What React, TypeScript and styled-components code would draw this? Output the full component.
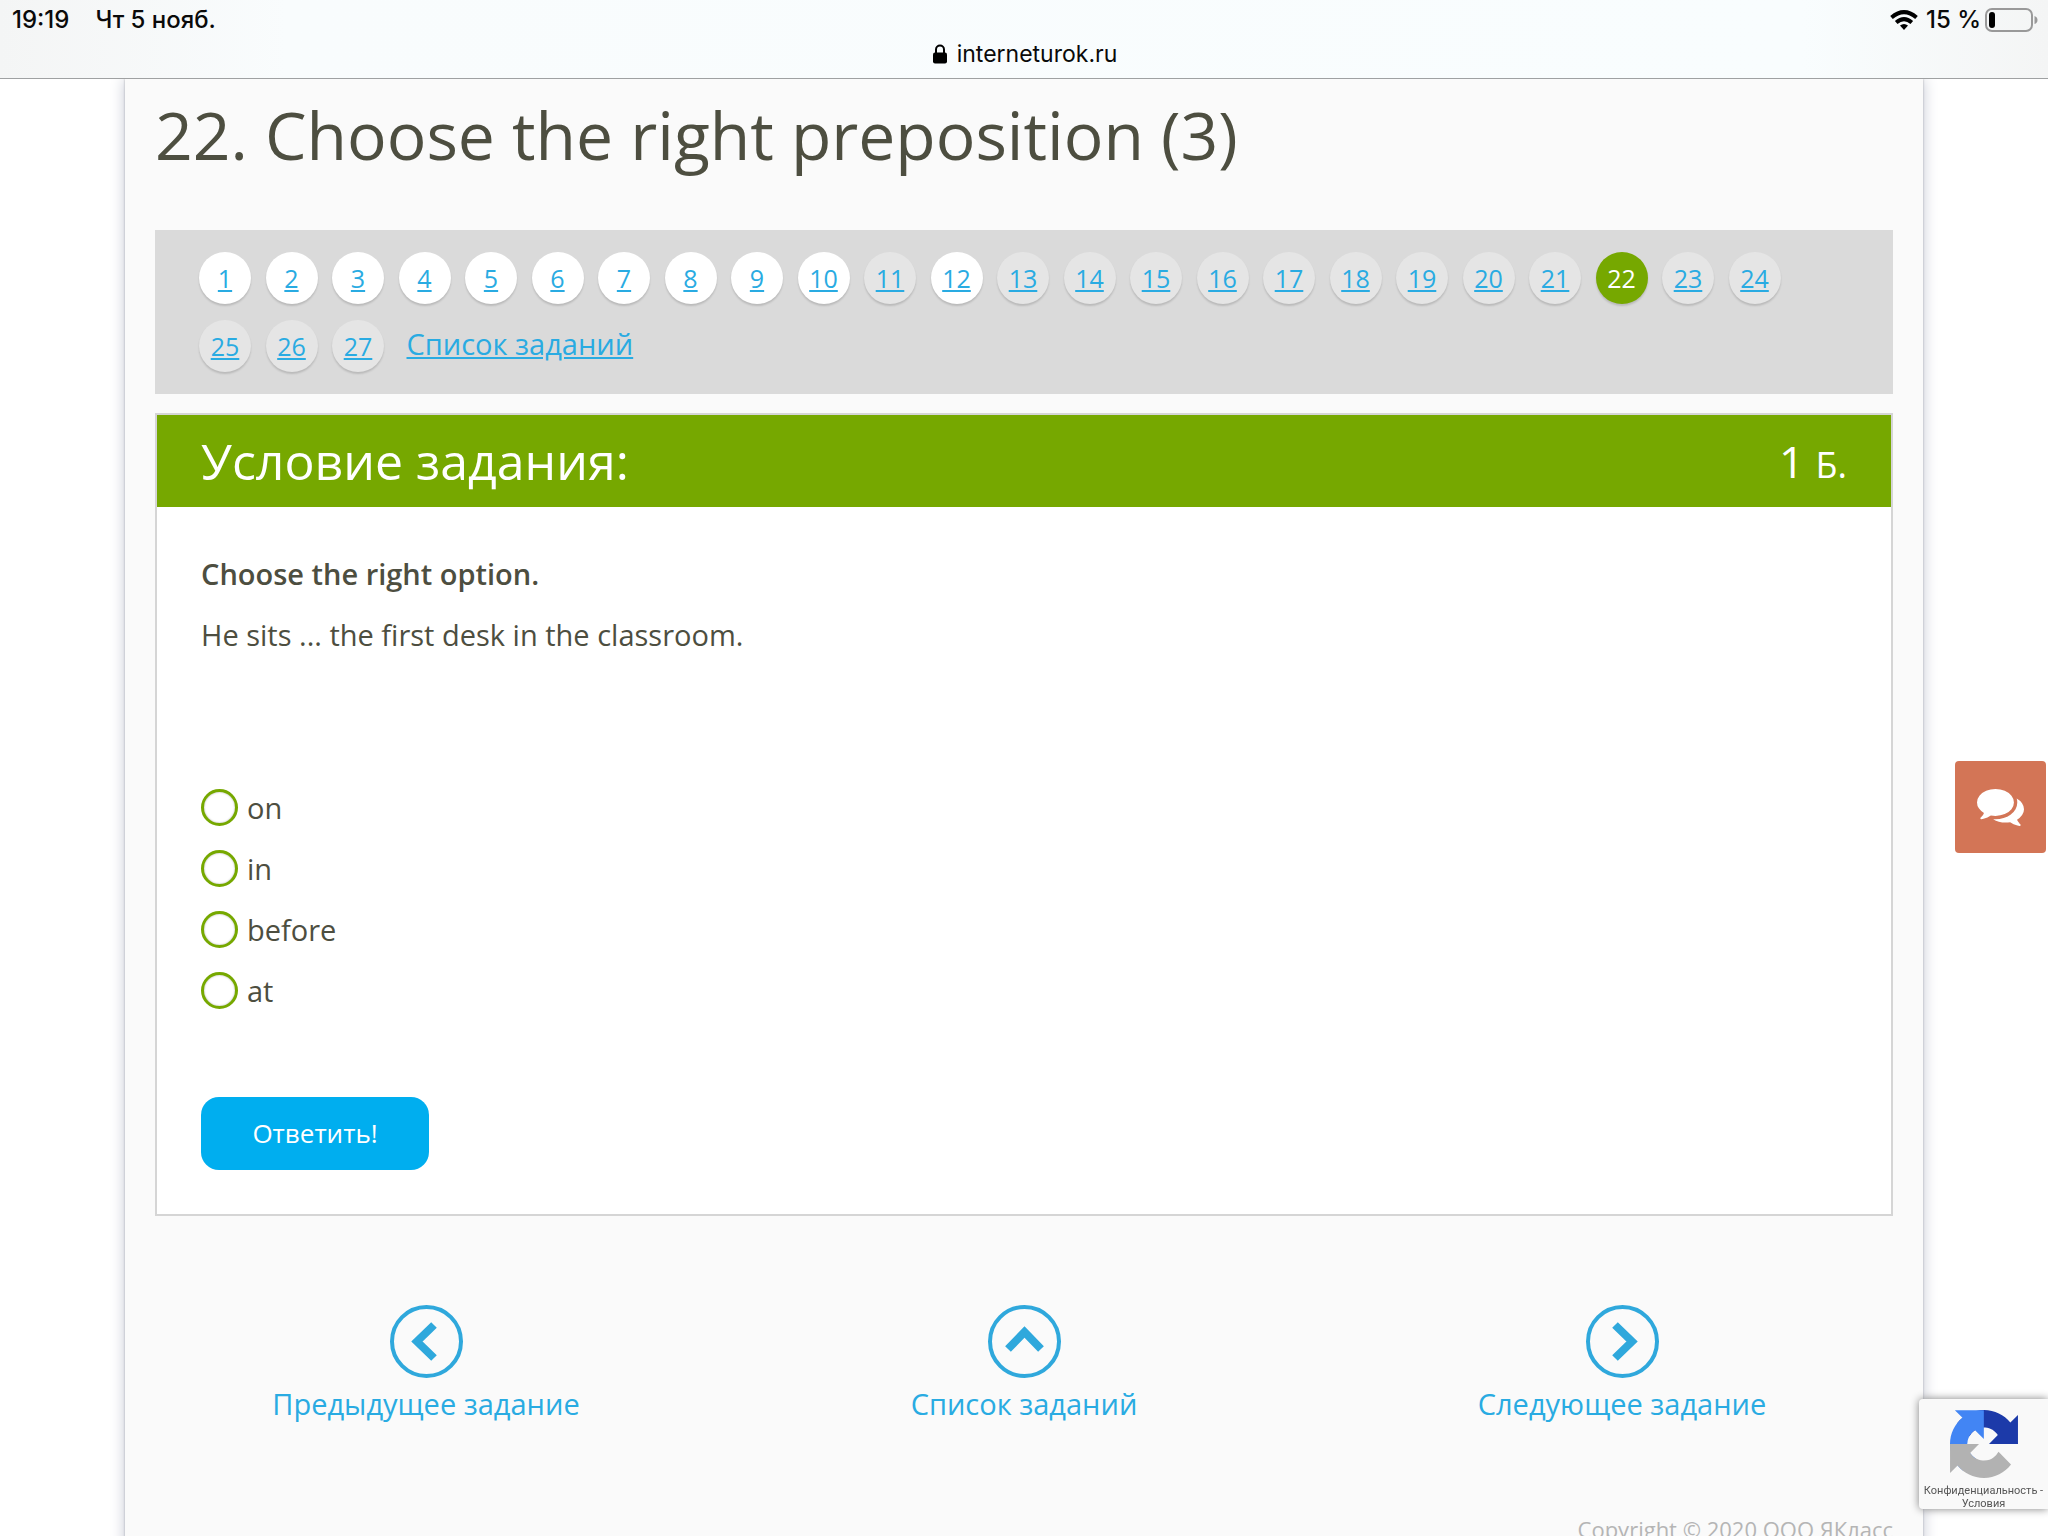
import React from "react";
import styled, { createGlobalStyle } from "styled-components";

const GlobalStyle = createGlobalStyle`
  *, *::before, *::after { box-sizing: border-box; }
  body {
    margin: 0;
    background: #fff;
    color: #4d4e40;
    font-family: "Open Sans", "Noto Sans", sans-serif;
    font-size: 29px;
  }
`;

const Shell = styled.div`
  display: flex;
  flex-direction: column;
  height: 100vh;
`;

const BrowserBar = styled.header`
  flex: none;
  padding: 6px 10px 10px 12px;
  border-bottom: 1px solid #9fa1a2;
  background: linear-gradient(90deg, #f4f5f5 0%, #f9fcfd 14%, #f9fdfe 88%, #f4f5f5 100%);
  color: #0a0a0a;
  font-family: Inter, "Liberation Sans", sans-serif;
  font-size: 24px;
  line-height: 28px;
`;

const StatusRow = styled.div`
  display: flex;
  justify-content: space-between;
  font-weight: 500;
`;

const StatusGroup = styled.div<{ $gap: number }>`
  display: flex;
  align-items: center;
  gap: ${({ $gap }) => $gap}px;
`;

const AddressRow = styled.div`
  display: flex;
  align-items: center;
  justify-content: center;
  gap: 10px;
  padding-top: 6px;
  font-size: 23px;
`;

const Scroll = styled.main`
  flex: 1;
  min-height: 0;
  overflow: hidden auto;
  scrollbar-width: none;
`;

const Page = styled.div`
  margin: 0 125px;
  background: #fafafa;
  box-shadow: 0 0 2px #a9abb0, 0 0 14px #c3c6d2;
`;

const Content = styled.div`
  padding: 11px 30px 0;
`;

const Title = styled.h1`
  margin: 0 0 52px;
  font-size: 66px;
  line-height: 88px;
  font-weight: 400;
`;

const TaskNav = styled.nav`
  padding: 22px 44px 6px;
  background: #dadada;
  font-size: 25px;
  line-height: 52px;
`;

type PillState = "done" | "open" | "current";

const pillColor = { done: "#fff", open: "#e5e5e5", current: "#76a800" };

const Pill = styled.a<{ $state: PillState }>`
  display: inline-block;
  width: 52px;
  height: 52px;
  margin: 0 8px 16px 0;
  border-radius: 50%;
  background: ${({ $state }) => pillColor[$state]};
  box-shadow: 0 2px 2px rgba(0, 0, 0, 0.15);
  color: ${({ $state }) => ($state === "current" ? "#fff" : "#29abe2")};
  text-align: center;
  text-decoration: ${({ $state }) => ($state === "current" ? "none" : "underline")};
  vertical-align: top;
`;

const ListLink = styled.a`
  display: inline-block;
  margin-left: 8px;
  color: #29abe2;
  font-size: 29px;
  line-height: 48px;
  vertical-align: top;
`;

const Card = styled.section`
  margin-top: 19px;
  border: 2px solid #d5d5d5;
  background: #fff;
`;

const CardHead = styled.div`
  display: flex;
  align-items: center;
  justify-content: space-between;
  padding: 0 44px;
  background: #76a800;
  color: #fff;
  line-height: 92px;
`;

const CardTitle = styled.h2`
  margin: 0;
  font-size: 50px;
  font-weight: 400;
`;

const Points = styled.span`
  font-size: 44px;
`;

const PointsUnit = styled.small`
  font-size: 36px;
  line-height: 1;
`;

const Form = styled.form`
  padding: 36px 44px 44px;
`;

const Question = styled.div`
  margin-bottom: 112px;
  line-height: 61px;

  p { margin: 0; }
  strong { font-weight: 600; }
`;

const Options = styled.fieldset`
  margin: 0 0 76px;
  padding: 0;
  border: 0;
`;

const Option = styled.label`
  display: flex;
  align-items: center;
  gap: 9px;
  line-height: 61px;
`;

const Radio = styled.input`
  appearance: none;
  width: 37px;
  height: 37px;
  margin: 0;
  border: 3px solid #76a800;
  border-radius: 50%;
  background: #fff;
  box-shadow: inset 0 0 2px rgba(0, 0, 0, 0.35);

  &:checked { background: radial-gradient(#76a800 0 9px, #fff 10px); }
`;

const Submit = styled.button`
  display: block;
  min-width: 228px;
  padding: 0 40px;
  border: 0;
  border-radius: 18px;
  background: #00aeef;
  color: #fff;
  font: inherit;
  font-size: 26px;
  line-height: 73px;
`;

const Pager = styled.nav`
  display: grid;
  grid-template-columns: repeat(3, 1fr);
  padding: 89px 2px;
`;

const PagerLink = styled.a`
  display: flex;
  flex-direction: column;
  align-items: center;
  gap: 6px;
  color: #29abe2;
  line-height: 40px;
  text-decoration: none;
`;

const Footer = styled.footer`
  padding: 0 30px 40px;
  color: #b5b5b5;
  font-size: 22px;
  line-height: 32px;
  text-align: right;
`;

const ChatButton = styled.button`
  position: fixed;
  top: 761px;
  right: 2px;
  display: grid;
  place-items: center;
  width: 91px;
  height: 92px;
  padding: 0;
  border: 0;
  border-radius: 4px;
  background: #d37556;
`;

const Captcha = styled.aside`
  position: fixed;
  right: 0;
  bottom: 27px;
  display: flex;
  flex-direction: column;
  align-items: center;
  gap: 6px;
  width: 129px;
  height: 110px;
  padding-top: 11px;
  border-radius: 4px 0 0 4px;
  background: #f9f9f9;
  box-shadow: 0 0 8px #808080;
  color: #555;
  font-family: Roboto, sans-serif;
  font-size: 11px;
  line-height: 13px;
  text-align: center;
  white-space: nowrap;

  svg { flex: none; }
  a { color: inherit; text-decoration: none; }
`;

function WifiIcon() {
  return (
    <svg width="28" height="20" viewBox="0 0 28 20" fill="none" stroke="#000" strokeWidth="4">
      <path d="M1.5 7.6Q14-3.2 26.5 7.6" />
      <path d="M6.2 12.6Q14 5.8 21.8 12.6" />
      <path d="M14 20l-4-4.4q4-3 8 0z" fill="#000" stroke="none" />
    </svg>
  );
}

function BatteryIcon() {
  return (
    <svg width="53" height="24" viewBox="0 0 53 24">
      <rect x="1" y="1" width="46" height="22" rx="6" fill="none" stroke="#999" strokeWidth="2" />
      <rect x="4" y="4" width="6" height="16" rx="3" fill="#000" />
      <path d="M49.5 8q3 1 3 4t-3 4z" fill="#999" />
    </svg>
  );
}

function LockIcon() {
  return (
    <svg width="14" height="20" viewBox="0 0 14 20">
      <path d="M3 9V5.5a4 4 0 0 1 8 0V9" fill="none" stroke="#000" strokeWidth="2" />
      <rect y="8.5" width="14" height="11" rx="2" fill="#000" />
    </svg>
  );
}

function ArrowIcon({ points }: { points: string }) {
  return (
    <svg width="73" height="73" viewBox="0 0 73 73" fill="none" stroke="#2fa8dc">
      <circle cx="36.5" cy="36.5" r="34.5" strokeWidth="4" />
      <polyline points={points} strokeWidth="8" />
    </svg>
  );
}

function ChatIcon() {
  return (
    <svg width="47" height="37" viewBox="0 256 1792 1408" fill="#fff">
      <path d="M1408 768q0 139-94 257t-256.5 186.5-353.5 68.5q-86 0-176-16-124 88-278 128-36 9-86 16h-3q-11 0-20.5-8t-11.5-21q-1-3-1-6.5t.5-6.5 2-6l2.5-5 3.5-5.5 4-5 4.5-5 4-4.5q5-6 23-25t26-29.5 22.5-29 25-38.5 20.5-44q-124-72-195-177t-71-224q0-139 94-257t256.5-186.5 353.5-68.5 353.5 68.5 256.5 186.5 94 257zm384 256q0 120-71 224.5t-195 176.5q10 24 20.5 44t25 38.5 22.5 29 26 29.5 23 25q1 1 4 4.5t4.5 5 4 5 3.5 5.5l2.5 5 2 6 .5 6.5-1 6.5q-3 14-13 22t-22 7q-50-7-86-16-154-40-278-128-90 16-176 16-271 0-472-132 58 4 88 4 161 0 309-45t264-129q125-92 192-212t67-254q0-77-23-152 129 71 204 178t75 230z" />
    </svg>
  );
}

function CaptchaLogo() {
  return (
    <svg width="68" height="68" viewBox="0 0 64 64">
      <path fill="#1c3aa9" d="M64 31.955l-.033-1.37V4.687l-7.16 7.16C50.948 4.674 42.033.093 32.05.093c-10.4 0-19.622 4.96-25.458 12.64l11.736 11.86a15.55 15.55 0 0 1 4.754-5.334c2.05-1.6 4.952-2.906 8.968-2.906.485 0 .86.057 1.135.163 4.976.393 9.288 3.14 11.828 7.124l-8.307 8.307L64 31.953" />
      <path fill="#4285f4" d="M31.862.094l-1.37.033H4.594l7.16 7.16C4.58 13.147 0 22.06 0 32.046c0 10.4 4.96 19.622 12.64 25.458L24.5 45.768a15.55 15.55 0 0 1-5.334-4.754c-1.6-2.05-2.906-4.952-2.906-8.968 0-.485.057-.86.163-1.135.393-4.976 3.14-9.288 7.124-11.828l8.307 8.307L31.86.095" />
      <path fill="#b2b2b2" d="M.001 32.045l.033 1.37v25.898l7.16-7.16c5.86 7.173 14.774 11.754 24.76 11.754 10.4 0 19.622-4.96 25.458-12.64l-11.736-11.86a15.55 15.55 0 0 1-4.754 5.334c-2.05 1.6-4.952 2.906-8.968 2.906-.485 0-.86-.057-1.135-.163-4.976-.393-9.288-3.14-11.828-7.124l8.307-8.307c-10.522.04-22.4.066-27.295-.005" />
    </svg>
  );
}

const CURRENT = 22;
const tasks = Array.from({ length: 27 }, (_, i) => i + 1);
const stateOf = (n: number): PillState =>
  n === CURRENT ? "current" : n <= 10 || n === 12 ? "done" : "open";

const pagerLinks = [
  { label: "Предыдущее задание", points: "44,20 27,36.5 44,53" },
  { label: "Список заданий", points: "20,44 36.5,27 53,44" },
  { label: "Следующее задание", points: "29,20 46,36.5 29,53" },
];

export default function App() {
  return (
    <Shell>
      <GlobalStyle />
      <BrowserBar>
        <StatusRow>
          <StatusGroup $gap={26}>
            <span>19:19</span>
            <span>Чт 5 нояб.</span>
          </StatusGroup>
          <StatusGroup $gap={8}>
            <WifiIcon />
            <StatusGroup $gap={4}>
              <span>15 %</span>
              <BatteryIcon />
            </StatusGroup>
          </StatusGroup>
        </StatusRow>
        <AddressRow>
          <LockIcon />
          <span>interneturok.ru</span>
        </AddressRow>
      </BrowserBar>
      <Scroll>
        <Page>
          <Content>
            <Title>22. Choose the right preposition (3)</Title>
            <TaskNav>
              {tasks.map((n) => (
                <React.Fragment key={n}>
                  <Pill href={`#task-${n}`} $state={stateOf(n)}>{n}</Pill>{" "}
                </React.Fragment>
              ))}
              <ListLink href="#list">Список заданий</ListLink>
            </TaskNav>
            <Card>
              <CardHead>
                <CardTitle>Условие задания:</CardTitle>
                <Points>1 <PointsUnit>Б.</PointsUnit></Points>
              </CardHead>
              <Form onSubmit={(e) => e.preventDefault()}>
                <Question>
                  <p><strong>Choose the right option.</strong></p>
                  <p>He sits ... the first desk in the classroom.</p>
                </Question>
                <Options aria-label="Choose the right option.">
                  {["on", "in", "before", "at"].map((word) => (
                    <Option key={word}>
                      <Radio type="radio" name="answer" value={word} />
                      {word}
                    </Option>
                  ))}
                </Options>
                <Submit type="submit">Ответить!</Submit>
              </Form>
            </Card>
          </Content>
          <Pager>
            {pagerLinks.map(({ label, points }) => (
              <PagerLink key={label} href="#task">
                <ArrowIcon points={points} />
                {label}
              </PagerLink>
            ))}
          </Pager>
          <Footer>Copyright © 2020 ООО ЯКласс</Footer>
        </Page>
      </Scroll>
      <ChatButton type="button" aria-label="Чат">
        <ChatIcon />
      </ChatButton>
      <Captcha>
        <CaptchaLogo />
        <div>
          <a href="#privacy">Конфиденциальность</a> -<br />
          <a href="#terms">Условия</a>
        </div>
      </Captcha>
    </Shell>
  );
}
